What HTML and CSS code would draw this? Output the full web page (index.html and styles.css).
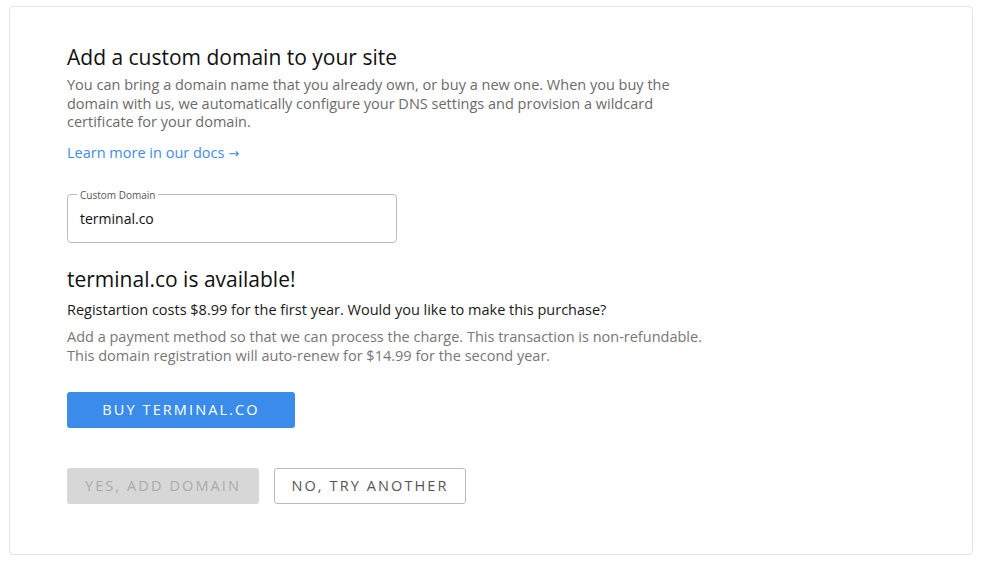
FILE: index.html
```html
<!DOCTYPE html>
<html>
<head>
<meta charset="utf-8">
<link rel="stylesheet" href="styles.css">
</head>
<body>
<div class="card">
  <h1 class="title">Add a custom domain to your site</h1>
  <p class="desc">You can bring a domain name that you already own, or buy a new one. When you buy the domain with us, we automatically configure your DNS settings and provision a wildcard certificate for your domain.</p>
  <a class="link" href="#">Learn more in our docs <span class="arrow">→</span></a>
  <fieldset class="field">
    <legend class="legend">Custom Domain</legend>
    <div class="value">terminal.co</div>
  </fieldset>
  <h2 class="avail">terminal.co is available!</h2>
  <p class="cost">Registartion costs $8.99 for the first year. Would you like to make this purchase?</p>
  <p class="note">Add a payment method so that we can process the charge. This transaction is non-refundable.<br>This domain registration will auto-renew for $14.99 for the second year.</p>
  <div class="buy-row"><button class="btn btn-primary">BUY TERMINAL.CO</button></div>
  <div class="actions">
    <button class="btn btn-disabled">YES, ADD DOMAIN</button>
    <button class="btn btn-outline">NO, TRY ANOTHER</button>
  </div>
</div>
</body>
</html>
```
FILE: styles.css
```css
html, body { margin: 0; padding: 0; background: #fff; }
body {
  font-family: "Open Sans", "Noto Sans", sans-serif;
  padding: 6px 9px 8px 9px;
}
.card {
  box-sizing: border-box;
  height: 549px;
  border: 1px solid #e4e4e4;
  border-radius: 4px;
  padding: 37px 57px 0 57px;
}
.title {
  margin: 0;
  font-size: 21px;
  font-weight: 400;
  line-height: 26px;
  color: #111;
}
.desc {
  margin: 6px 0 0 0;
  width: 632px;
  font-size: 14.5px;
  line-height: 18.5px;
  color: #6b6b6b;
}
.link {
  display: inline-block;
  margin-top: 12px;
  font-size: 14.5px;
  line-height: 18px;
  color: #3d8de8;
  text-decoration: none;
}
.arrow {
  font-family: "DejaVu Sans", sans-serif;
  font-size: 13px;
}
.field {
  box-sizing: border-box;
  width: 330px;
  height: 54px;
  margin: 26px 0 0 0;
  padding: 0 12px;
  border: 1px solid #bdbdbd;
  border-radius: 4px;
}
.legend {
  padding: 0 3px;
  margin-left: -3px;
  font-size: 10px;
  line-height: 12px;
  color: #555;
}
.value {
  font-size: 14px;
  line-height: 18px;
  color: #111;
  padding-top: 9px;
}
.avail {
  margin: 24px 0 0 0;
  font-size: 21px;
  font-weight: 400;
  line-height: 24px;
  color: #111;
}
.cost {
  margin: 10px 0 0 0;
  font-size: 14.5px;
  line-height: 18px;
  font-weight: 500;
  color: #1a1a1a;
}
.note {
  margin: 8px 0 0 0;
  font-size: 14.5px;
  line-height: 19px;
  color: #777;
}
.buy-row { margin-top: 27px; display: flex; }
.actions { margin-top: 40px; display: flex; gap: 15px; }
.btn {
  box-sizing: border-box;
  height: 36px;
  border-radius: 3px;
  font-family: inherit;
  font-size: 14.5px;
  letter-spacing: 2.1px;
  padding: 0;
  cursor: pointer;
}
.btn-primary {
  width: 228px;
  background: #3b8bea;
  border: none;
  color: #fff;
}
.btn-disabled {
  width: 192px;
  background: #d7d7d7;
  border: none;
  color: #ababab;
}
.btn-outline {
  width: 192px;
  background: #fff;
  border: 1px solid #bbb;
  color: #555;
}
```
